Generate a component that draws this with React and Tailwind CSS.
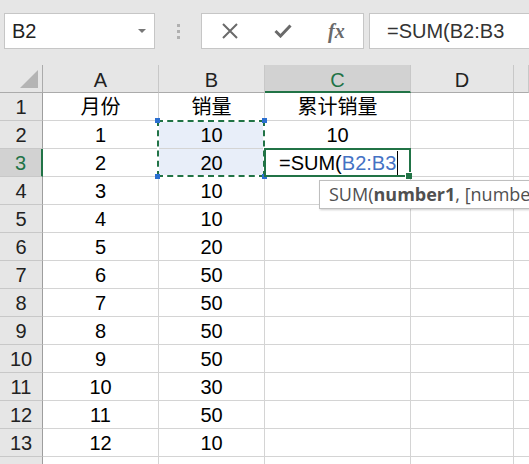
const widths = ['w-[116px]', 'w-[106px]', 'w-[146px]', 'w-[103px]'];

const months = [1, 2, 3, 4, 5, 6, 7, 8, 9, 10, 11, 12];
const sales = [10, 20, 10, 10, 20, 50, 50, 50, 50, 30, 50, 10];

const rows = [
  ['月份', '销量', '累计销量', ''],
  ...months.map((m, i) => [String(m), String(sales[i]), i === 0 ? '10' : '', '']),
  ['', '', '', ''],
];

const HeaderRow = () => {
  const cols = ['A', 'B', 'C', 'D', ''];
  return (
    <div className="flex h-[28px]">
      <div className="w-[43px] shrink-0 h-full border-r border-b border-[#ababab] bg-[#e6e6e6] relative">
        <svg className="absolute left-[20px] top-[5px]" width="19" height="19" viewBox="0 0 19 19">
          <polygon points="18,0 18,18 0,18" fill="#b4b4b4" />
        </svg>
      </div>
      {cols.map((c, i) => {
        const selected = c === 'C';
        const w = i < 4 ? widths[i] : 'flex-1';
        return (
          <div
            key={i}
            className={`${w} shrink-0 h-full flex items-center justify-center pt-[3px] border-r border-[#c8c8c8] ${
              selected
                ? 'bg-[#d2d2d2] text-[#217346] border-b-2 border-b-[#217346]'
                : 'bg-[#e6e6e6] text-[#222] border-b border-b-[#ababab]'
            }`}
          >
            {c}
          </div>
        );
      })}
    </div>
  );
};

const DataRow = ({ n, cells }) => {
  const active = n === 3;
  return (
    <div className="flex h-[28px]">
      <div
        className={`w-[43px] shrink-0 h-full flex items-center justify-center border-b border-[#c8c8c8] ${
          active
            ? 'bg-[#d2d2d2] text-[#217346] border-r-2 border-r-[#217346]'
            : 'bg-[#e6e6e6] text-[#222] border-r border-r-[#9e9e9e]'
        }`}
      >
        {n <= 13 ? n : ''}
      </div>
      {cells.map((v, i) => {
        const inRange = i === 1 && (n === 2 || n === 3);
        return (
          <div
            key={i}
            className={`${widths[i]} shrink-0 h-full flex items-center justify-center border-r border-b border-[#d4d4d4] text-black ${
              inRange ? 'bg-[#e8eef9]' : 'bg-white'
            }`}
          >
            {v}
          </div>
        );
      })}
      <div className="flex-1 h-full border-b border-[#d4d4d4] bg-white" />
    </div>
  );
};

const Toolbar = () => (
  <div className="h-[65px] flex items-start pt-[13px]">
    <div className="ml-[4px] w-[151px] h-[36px] bg-white border border-[#c6c6c6] flex items-center justify-between pl-[7px] pr-[8px] text-[20px] text-[#222]">
      <span>B2</span>
      <svg width="8" height="5" viewBox="0 0 8 5">
        <polygon points="0,0 8,0 4,4" fill="#777" />
      </svg>
    </div>
    <div className="w-[46px] h-[36px] flex flex-col items-center justify-center gap-[3px]">
      <div className="w-[3px] h-[3px] bg-[#b0b0b0]" />
      <div className="w-[3px] h-[3px] bg-[#b0b0b0]" />
      <div className="w-[3px] h-[3px] bg-[#b0b0b0]" />
    </div>
    <div className="w-[163px] h-[36px] bg-white border border-[#c6c6c6] flex items-center">
      <svg className="ml-[19px]" width="18" height="16" viewBox="0 0 18 16">
        <path d="M2 1 L16 15 M16 1 L2 15" stroke="#6a6a6a" strokeWidth="2" />
      </svg>
      <svg className="ml-[35px]" width="18" height="14" viewBox="0 0 18 14">
        <path d="M1.5 7 L6.5 12 L16.5 1.5" stroke="#6a6a6a" strokeWidth="3" fill="none" />
      </svg>
      <span className="ml-[36px] font-['Liberation_Serif',serif] italic font-bold text-[20px] text-[#6a6a6a] leading-none">
        fx
      </span>
    </div>
    <div className="ml-[5px] flex-1 h-[36px] bg-white border border-[#c6c6c6] border-r-0 flex items-center pl-[17px] text-[20px] text-[#333]">
      =SUM(B2:B3
    </div>
  </div>
);

export default function App() {
  return (
    <div className="w-[529px] h-[464px] overflow-hidden relative bg-[#e6e6e6] font-['Liberation_Sans','Noto_Sans_CJK_SC',sans-serif] text-[20px]">
      <Toolbar />
      <HeaderRow />
      {rows.map((cells, i) => (
        <DataRow key={i} n={i + 1} cells={i === 2 ? [cells[0], cells[1], '', ''] : cells} />
      ))}

      {/* copy range marquee around B2:B3 */}
      <div className="absolute left-[157px] top-[120px] w-[108px] h-[57px] border-2 border-white" />
      <div className="absolute left-[157px] top-[120px] w-[108px] h-[57px] border-2 border-dashed border-[#217346]" />
      <div className="absolute left-[155px] top-[118px] w-[5px] h-[5px] bg-[#2b6fd0]" />
      <div className="absolute left-[262px] top-[118px] w-[5px] h-[5px] bg-[#2b6fd0]" />
      <div className="absolute left-[155px] top-[174px] w-[5px] h-[5px] bg-[#2b6fd0]" />
      <div className="absolute left-[262px] top-[174px] w-[5px] h-[5px] bg-[#2b6fd0]" />

      {/* active cell C3 in edit mode */}
      <div className="absolute left-[264px] top-[148px] w-[147px] h-[29px] border-2 border-[#217346] flex items-center pl-[13px] bg-white">
        <span className="text-black">=SUM(</span>
        <span className="text-[#4472c4]">B2:B3</span>
        <span className="ml-[1px] w-[1px] h-[24px] bg-black" />
      </div>
      <div className="absolute left-[405px] top-[172px] w-[7px] h-[7px] bg-white" />
      <div className="absolute left-[406px] top-[173px] w-[6px] h-[6px] bg-[#217346]" />

      {/* function tooltip */}
      <div className="absolute left-[319px] top-[180px] w-[210px] h-[29px] overflow-hidden bg-white border border-[#bebebe] border-r-0 shadow-[1px_1px_2px_rgba(0,0,0,0.2)] flex items-center pl-[9px] text-[18px] text-[#505050] whitespace-nowrap font-['Open_Sans','Liberation_Sans',sans-serif]">
        SUM(<span className="font-bold">number1</span>, [numbe
      </div>
    </div>
  );
}
